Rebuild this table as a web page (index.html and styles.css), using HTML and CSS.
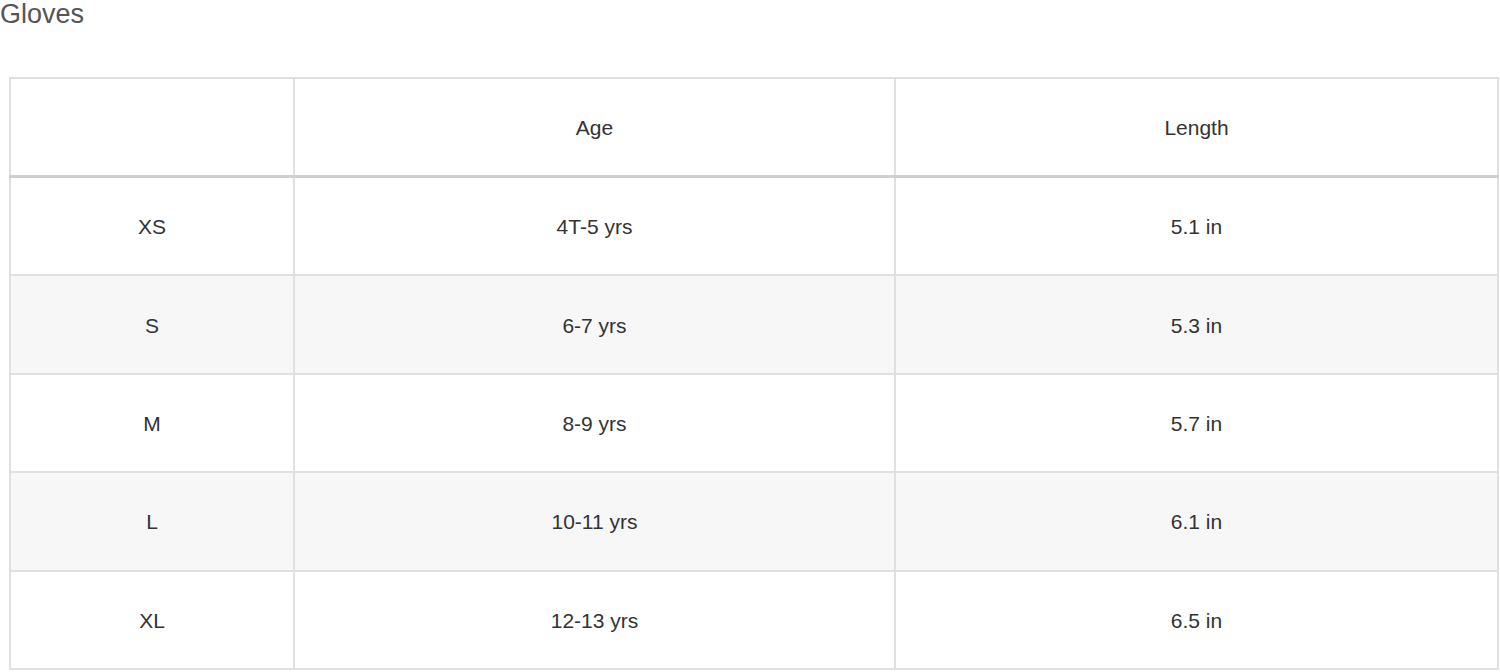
FILE: index.html
```html
<!DOCTYPE html>
<html>
<head>
<meta charset="utf-8">
<link rel="stylesheet" href="styles.css">
</head>
<body>
<div class="page">
  <h2 class="title">Gloves</h2>
  <table class="size-table">
    <colgroup>
      <col class="c1"><col class="c2"><col class="c3">
    </colgroup>
    <thead>
      <tr><th></th><th>Age</th><th>Length</th></tr>
    </thead>
    <tbody>
      <tr><td>XS</td><td>4T-5 yrs</td><td>5.1 in</td></tr>
      <tr class="alt"><td>S</td><td>6-7 yrs</td><td>5.3 in</td></tr>
      <tr><td>M</td><td>8-9 yrs</td><td>5.7 in</td></tr>
      <tr class="alt"><td>L</td><td>10-11 yrs</td><td>6.1 in</td></tr>
      <tr><td>XL</td><td>12-13 yrs</td><td>6.5 in</td></tr>
    </tbody>
  </table>
</div>
</body>
</html>
```

FILE: styles.css
```css
html, body {
  margin: 0;
  padding: 0;
  background: #fff;
}
.page {
  font-family: "Liberation Sans", Arial, sans-serif;
  color: #333;
}
.title {
  margin: 0 0 48px 0;
  font-size: 27px;
  font-weight: normal;
  line-height: 29px;
  color: #555;
}
.size-table {
  margin-left: 9px;
  width: 1488px;
  border-collapse: collapse;
  table-layout: fixed;
  font-size: 21px;
}
.c1 { width: 284px; }
.c2 { width: 601px; }
.c3 { width: 603px; }
.size-table th,
.size-table td {
  border: 2px solid #e0e0e0;
  text-align: center;
  vertical-align: middle;
  padding: 2px 0 0 0;
  font-weight: normal;
  color: #333;
}
.size-table thead th {
  height: 94px;
  border-bottom: 3px solid #cfcfcf;
}
.size-table tbody td {
  height: 94.4px;
}
.size-table tr.alt td {
  background: #f7f7f7;
}
```
